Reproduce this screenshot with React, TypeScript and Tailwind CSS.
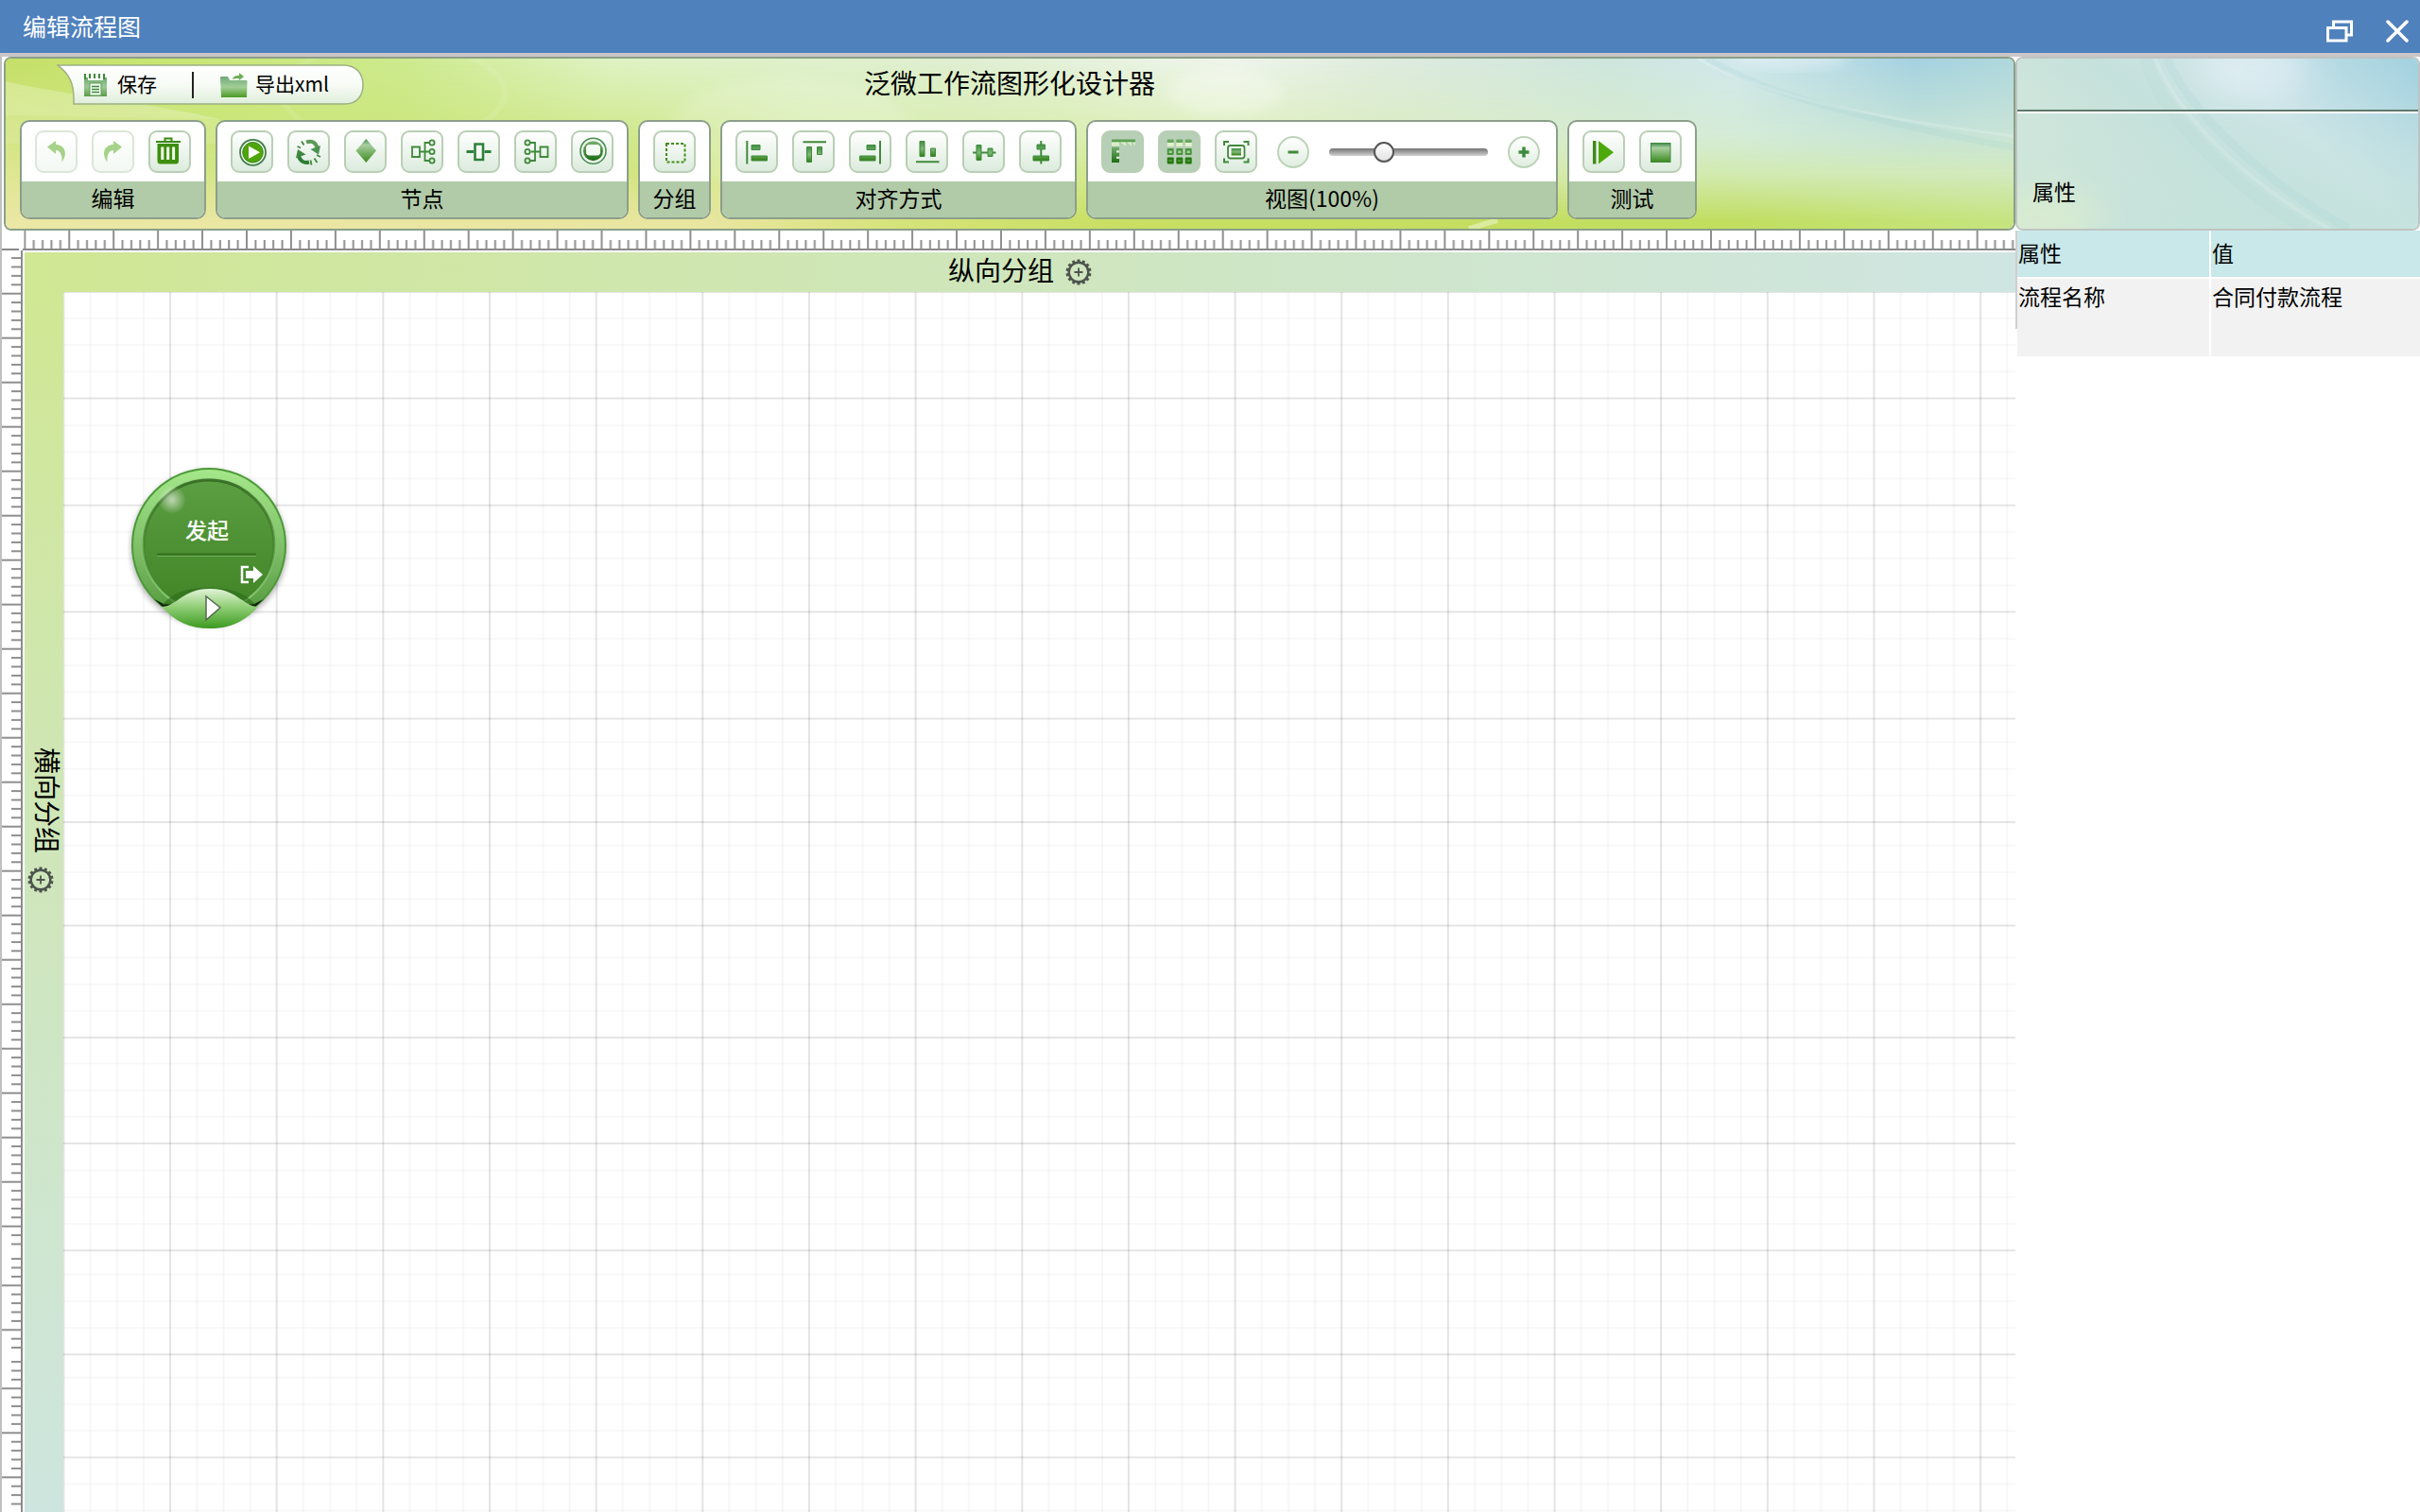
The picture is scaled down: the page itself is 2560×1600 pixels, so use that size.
import type { ReactNode } from 'react'

const GREEN = '#3f8a3a'

const Icon = ({ children }: { children: ReactNode }) => (
  <svg viewBox="2 2 41 41" className="size-[41px]" aria-hidden="true">
    {children}
  </svg>
)

const bars = (d: string, line: string) => (
  <Icon>
    <path d={line} stroke={GREEN} strokeWidth="2" />
    <path d={d} fill="url(#leaf)" stroke={GREEN} strokeWidth="1" />
  </Icon>
)

const icons = {
  undo: (
    <Icon>
      <path d="M13 17.500L22 11v4c9 0 13.500 9 6.500 18.500C29 26 27 21.500 22 21v4z" fill="#a5d288" />
    </Icon>
  ),
  redo: (
    <Icon>
      <path d="M32 17.500L23 11v4c-9 0-13.500 9-6.500 18.500C16 26 18 21.500 23 21v4z" fill="#a5d288" />
    </Icon>
  ),
  trash: (
    <Icon>
      <path d="M8 12h26" stroke="#3c8a10" strokeWidth="2" />
      <path d="M17.500 11.500V8.500h7v3" stroke="#3c8a10" strokeWidth="2" fill="none" />
      <path d="M9.500 14h22.500v18.500a3 3 0 0 1-3 3h-16.500a3 3 0 0 1-3-3z" fill="#3c8f0c" />
      <path d="M14.800 17.500v13.500M20.700 17.500v13.500M26.600 17.500v13.500" stroke="#f4faf0" strokeWidth="3" />
    </Icon>
  ),
  start: (
    <Icon>
      <circle cx="23.500" cy="23.300" r="13.500" fill="#f5faf3" stroke="#3d7f45" strokeWidth="1.800" />
      <circle cx="23.500" cy="23.300" r="10.800" fill="#4fa60a" stroke="#3a8420" strokeWidth="1" />
      <path d="M19 16.500L31 23.300L19 30z" fill="#fff" />
    </Icon>
  ),
  refresh: (
    <Icon>
      <path d="M20 12.500C25 10.500 29.500 12 31.500 18" stroke="#5c9a55" strokeWidth="4" fill="none" />
      <path d="M35 16L33 25.500L24.500 20z" fill="#4b9150" />
      <path d="M23 33.500C17.500 35 13.500 32.500 12 27" stroke="#2f7d33" strokeWidth="4" fill="none" />
      <path d="M9 29.500L11 20L19.500 25.500z" fill="#3f8a3f" />
      <path d="M10.500 17l3.500 1.500M15 11.500l2.500 4M24.500 31.500l1 5M28.500 29.500l3 4.500M31 26l4 2" stroke={GREEN} strokeWidth="1.800" />
    </Icon>
  ),
  diamond: (
    <Icon>
      <path d="M23.300 9L34 21.500L23.300 34L12.500 21.500z" fill="url(#gem)" />
    </Icon>
  ),
  fork: (
    <Icon>
      <g fill="none" stroke={GREEN} strokeWidth="1.800">
        <path d="M12 17.500h8v10.500h-8z M20 22.500h10 M30 13h-4.500v19h4.500" />
        <circle cx="33" cy="13" r="2.600" />
        <circle cx="33" cy="22.500" r="2.600" />
        <circle cx="33" cy="32" r="2.600" />
      </g>
    </Icon>
  ),
  merge: (
    <Icon>
      <path d="M9.500 22.500h7.500M28.500 22.500h7" stroke="#2f8038" strokeWidth="3" />
      <path d="M18.500 14.500h8.500v16.500h-8.500z" fill="#f5faf4" stroke="#2f8038" strokeWidth="2.600" />
    </Icon>
  ),
  join: (
    <Icon>
      <g fill="none" stroke={GREEN} strokeWidth="1.800">
        <path d="M27.500 17.500h8v10.500h-8z M27.500 22.500h-10 M17 13h5v19h-5" />
        <circle cx="14" cy="13" r="2.600" />
        <circle cx="14" cy="22.500" r="2.600" />
        <circle cx="14" cy="32" r="2.600" />
      </g>
    </Icon>
  ),
  end: (
    <Icon>
      <circle cx="23.500" cy="21.700" r="13.500" fill="#eef6ee" stroke="#4b8f50" strokeWidth="1.600" />
      <circle cx="23.500" cy="21.700" r="10.500" fill="url(#leafDark)" />
      <rect x="16" y="15" width="15" height="11.500" rx="3.500" fill="#f4faf4" />
    </Icon>
  ),
  group: (
    <Icon>
      <rect x="14" y="14" width="19.500" height="19.500" fill="none" stroke="#3f8f14" strokeWidth="2" strokeDasharray="3 2" />
    </Icon>
  ),
  left: bars('M17 15.500h9v5h-9z M17 27h16.500v5h-16.500z', 'M12.300 11v24.500'),
  top: bars('M15.500 17.500h5v16h-5z M26.500 17.500h5v8h-5z', 'M11.500 12.300h24.500'),
  right: bars('M19 15.500h9v5h-9z M11.500 27h16.500v5h-16.500z', 'M33 11v24.500'),
  bottom: bars('M15 11.500h5v16h-5z M26.500 19h5v8.500h-5z', 'M11 33.300h24.500'),
  middle: bars('M15 15.500h5v16h-5z M27 19h5v8.500h-5z', 'M11 23.500h24.500'),
  center: bars('M19 15h8.500v5h-8.500z M15 27h16.500v5h-16.500z', 'M23.300 11v24.500'),
  ruler: (
    <Icon>
      <path d="M11 9.500h25v3h-25z" fill="#5da052" />
      <path d="M11 12.500h8v4h-8z M20 12.500h6v4z M27 12.500h5v4z M33 12.500h3v4z" fill="#d9efc8" />
      <path d="M11 17.500h8v3.500h-3v2.500h3v4h-3v2.500h3v4h-8z" fill="url(#leafDark)" />
      <path d="M16 22.500h3M16 29h3" stroke="#e4f2dc" strokeWidth="1.500" />
    </Icon>
  ),
  grid: (
    <Icon>
      {[9.7, 19.3, 28.7].map((x) => (
        <g key={x}>
          <rect x={x} y="9.500" width="7" height="3.500" rx="1" fill="#6aa85f" />
          <rect x={x} y="13" width="7" height="4" fill="#e0f2cc" />
          <rect x={x} y="19" width="7" height="7" rx="1" fill="#4a9440" />
          <rect x={x + 2} y="21.500" width="3" height="2.500" fill="#a9d394" />
          <rect x={x} y="28.500" width="7" height="7" rx="1" fill="#24790f" />
          <rect x={x + 2} y="31" width="3" height="2" fill="#4f9a35" />
        </g>
      ))}
    </Icon>
  ),
  fit: (
    <Icon>
      <path d="M10 16v-4h5M30.500 12h5v4M35.500 29.500v4h-5M15 33.500h-5v-4" fill="none" stroke={GREEN} strokeWidth="2" />
      <rect x="14" y="16" width="17.500" height="13.500" rx="2.500" fill="#fff" stroke={GREEN} strokeWidth="1.800" />
      <rect x="17.500" y="19" width="10.500" height="7.500" fill="url(#leaf)" />
    </Icon>
  ),
  run: (
    <Icon>
      <path d="M12.700 11v24.500" stroke="#3f8a1c" strokeWidth="3.500" />
      <path d="M17 11L33 23.300L17 35.500z" fill="#4caa0c" />
    </Icon>
  ),
  stop: (
    <Icon>
      <rect x="12.500" y="13.500" width="20.500" height="20" fill="url(#gem)" stroke={GREEN} strokeWidth="1" />
    </Icon>
  ),
}

const groups: { label: string; tools: { name: keyof typeof icons; title: string; state?: 'off' | 'on' }[] }[] = [
  {
    label: '编辑',
    tools: [
      { name: 'undo', title: '撤销', state: 'off' },
      { name: 'redo', title: '重做', state: 'off' },
      { name: 'trash', title: '删除' },
    ],
  },
  {
    label: '节点',
    tools: [
      { name: 'start', title: '创建' },
      { name: 'refresh', title: '处理' },
      { name: 'diamond', title: '审批' },
      { name: 'fork', title: '分叉' },
      { name: 'merge', title: '中间点' },
      { name: 'join', title: '合并' },
      { name: 'end', title: '归档' },
    ],
  },
  { label: '分组', tools: [{ name: 'group', title: '分组' }] },
  {
    label: '对齐方式',
    tools: [
      { name: 'left', title: '左对齐' },
      { name: 'top', title: '上对齐' },
      { name: 'right', title: '右对齐' },
      { name: 'bottom', title: '下对齐' },
      { name: 'middle', title: '水平居中' },
      { name: 'center', title: '垂直居中' },
    ],
  },
  {
    label: '视图(100%)',
    tools: [
      { name: 'ruler', title: '标尺', state: 'on' },
      { name: 'grid', title: '网格', state: 'on' },
      { name: 'fit', title: '适应窗口' },
    ],
  },
  {
    label: '测试',
    tools: [
      { name: 'run', title: '运行' },
      { name: 'stop', title: '停止' },
    ],
  },
]

const toolState = {
  normal: 'border-[#b9cfb4] bg-linear-to-b from-white to-[#dcebdd]',
  off: 'border-[#dbe6d8] bg-linear-to-b from-white to-[#f3f8f3]',
  on: 'border-[#b9cfb4] bg-[#b7cfb6]',
}

const roundButton =
  'flex size-[34px] items-center justify-center rounded-full border-2 border-[#bdd4b8] bg-linear-to-b from-white to-[#e0eee0]'

// Shared gradients for every icon on the page
function Defs() {
  return (
    <svg className="absolute size-0" aria-hidden="true">
      <defs>
        <linearGradient id="leaf" x1="0" y1="0" x2="0" y2="1">
          <stop offset="0" stopColor="#3f8f42" />
          <stop offset="0.5" stopColor="#7fb877" />
          <stop offset="1" stopColor="#2f7f14" />
        </linearGradient>
        <linearGradient id="leafDark" x1="0" y1="0" x2="0" y2="1">
          <stop offset="0" stopColor="#77b070" />
          <stop offset="1" stopColor="#1d6b14" />
        </linearGradient>
        <linearGradient id="gem" x1="0" y1="0" x2="0" y2="1">
          <stop offset="0" stopColor="#3f8a4c" />
          <stop offset="0.25" stopColor="#a9cfa0" />
          <stop offset="1" stopColor="#3a8a1e" />
        </linearGradient>
      </defs>
    </svg>
  )
}

function GearIcon() {
  const teeth = Array.from({ length: 14 }, (_, i) => (i * 360) / 14)
  return (
    <svg viewBox="0 0 28 28" className="size-7" aria-hidden="true">
      {teeth.map((a) => (
        <rect key={a} x="12.500" y="0.500" width="3" height="4" fill="#4d534d" transform={`rotate(${a} 14 14)`} />
      ))}
      <circle cx="14" cy="14" r="10.300" fill="none" stroke="#4d534d" strokeWidth="2.400" />
      <path d="M14 9.500v9M9.500 14h9" stroke="#4d534d" strokeWidth="1.800" />
    </svg>
  )
}

// Green to blue sky artwork behind the toolbar
function ToolbarSky() {
  return (
    <svg viewBox="0 0 2124 180" preserveAspectRatio="none" className="absolute inset-0 size-full" aria-hidden="true">
      <defs>
        <linearGradient id="low">
          <stop offset="0" stopColor="#ebe7a5" />
          <stop offset="0.35" stopColor="#e9e6a0" />
          <stop offset="0.45" stopColor="#d5e378" />
          <stop offset="0.56" stopColor="#c8df62" />
          <stop offset="0.86" stopColor="#c1de5f" />
          <stop offset="1" stopColor="#c6e580" />
        </linearGradient>
        <linearGradient id="mid">
          <stop offset="0" stopColor="#d9e78c" />
          <stop offset="0.1" stopColor="#cde67c" />
          <stop offset="0.31" stopColor="#cbe474" />
          <stop offset="0.4" stopColor="#d8efa6" />
          <stop offset="0.53" stopColor="#d6ed9e" />
          <stop offset="0.75" stopColor="#dcefc2" />
          <stop offset="0.88" stopColor="#d7eed0" />
          <stop offset="1" stopColor="#d6ebd4" />
        </linearGradient>
        <linearGradient id="high">
          <stop offset="0" stopColor="#c4df68" />
          <stop offset="0.08" stopColor="#c8e673" />
          <stop offset="0.2" stopColor="#cdea8e" />
          <stop offset="0.3" stopColor="#def2c4" />
          <stop offset="0.48" stopColor="#dfeed2" />
          <stop offset="0.61" stopColor="#eef5ec" />
          <stop offset="0.68" stopColor="#dfebdf" />
          <stop offset="0.8" stopColor="#cde5dd" />
          <stop offset="0.86" stopColor="#d0e7ec" />
          <stop offset="0.95" stopColor="#a4d1e0" />
          <stop offset="1" stopColor="#aed7dd" />
        </linearGradient>
        <linearGradient id="fadeHigh" x1="0" y1="0" x2="0" y2="1">
          <stop offset="0" stopColor="#fff" />
          <stop offset="0.66" stopColor="#000" />
        </linearGradient>
        <linearGradient id="fadeMid" x1="0" y1="0" x2="0" y2="1">
          <stop offset="0.45" stopColor="#fff" />
          <stop offset="0.68" stopColor="#bbb" />
          <stop offset="0.96" stopColor="#000" />
        </linearGradient>
        <mask id="maskHigh">
          <rect width="2124" height="180" fill="url(#fadeHigh)" />
        </mask>
        <mask id="maskMid">
          <rect width="2124" height="180" fill="url(#fadeMid)" />
        </mask>
        <filter id="soft">
          <feGaussianBlur stdDeviation="6" />
        </filter>
      </defs>
      <rect width="2124" height="180" fill="url(#low)" />
      <rect width="2124" height="180" fill="url(#mid)" mask="url(#maskMid)" />
      <rect width="2124" height="180" fill="url(#high)" mask="url(#maskHigh)" />
      <path d="M0 24C80 42 150 46 226 64V90H0z" fill="#fff" opacity="0.14" />
      <path d="M0 24C80 42 150 46 226 64L0 60z" fill="#fff" opacity="0.12" />
      <ellipse cx="410" cy="36" rx="118" ry="52" fill="none" stroke="#fff" strokeWidth="6" opacity="0.09" />
      <ellipse cx="830" cy="80" rx="130" ry="60" fill="#fff" opacity="0.14" filter="url(#soft)" />
      <ellipse cx="1290" cy="36" rx="60" ry="24" fill="#fff" opacity="0.25" filter="url(#soft)" />
      <ellipse cx="1890" cy="0" rx="60" ry="12" fill="#fff" opacity="0.3" filter="url(#soft)" />
      <path d="M1790 0C1850 34 1940 58 2124 82" fill="none" stroke="#fff" strokeWidth="3" opacity="0.18" />
      <path d="M1800 0C1860 36 1950 62 2124 94" fill="none" stroke="#8fc7cc" strokeWidth="7" opacity="0.12" />
      <path d="M1548 180l30 -9" stroke="#fff" strokeWidth="6" opacity="0.4" />
    </svg>
  )
}

function PanelSky() {
  return (
    <svg viewBox="0 0 424 180" preserveAspectRatio="none" className="absolute inset-0 size-full" aria-hidden="true">
      <defs>
        <linearGradient id="panelBase" x1="0" y1="0.5" x2="1" y2="0">
          <stop offset="0" stopColor="#d3e7da" />
          <stop offset="0.35" stopColor="#c5e1dc" />
          <stop offset="0.6" stopColor="#cee5e8" />
          <stop offset="1" stopColor="#a2d1df" />
        </linearGradient>
        <linearGradient id="panelFade" x1="0" y1="0" x2="0" y2="1">
          <stop offset="0.2" stopColor="#c4e2dc" stopOpacity="0" />
          <stop offset="1" stopColor="#c4e2dc" />
        </linearGradient>
        <filter id="panelSoft" x="-100%" y="-200%" width="300%" height="500%">
          <feGaussianBlur stdDeviation="18" />
        </filter>
      </defs>
      <rect width="424" height="180" fill="url(#panelBase)" />
      <rect width="424" height="180" fill="url(#panelFade)" opacity="0.8" />
      <ellipse cx="250" cy="10" rx="60" ry="28" fill="#e6f1f7" opacity="0.7" filter="url(#panelSoft)" />
      <ellipse cx="20" cy="170" rx="70" ry="36" fill="#dcedcf" opacity="0.8" filter="url(#panelSoft)" />
      <path d="M146 0C170 60 240 130 330 180" fill="none" stroke="#fff" strokeWidth="4" opacity="0.14" />
      <path d="M158 0C184 56 254 126 350 180" fill="none" stroke="#8cc6cb" strokeWidth="9" opacity="0.1" />
      <path d="M135 0C156 64 226 134 306 180" fill="none" stroke="#8cc6bd" strokeWidth="14" opacity="0.06" />
    </svg>
  )
}

function FileTab() {
  return (
    <div className="relative ml-[54px] flex h-[43px] w-[325px] items-center pl-7">
      <svg viewBox="0 0 326 43" className="absolute inset-0 size-full" aria-hidden="true">
        <defs>
          <linearGradient id="tab" x1="0" y1="0" x2="0" y2="1">
            <stop offset="0" stopColor="#fff" />
            <stop offset="0.5" stopColor="#f7fbf5" />
            <stop offset="1" stopColor="#e0eedb" />
          </linearGradient>
        </defs>
        <path
          d="M1 1H304C318 1 325 10 325 22C325 34 318 42 306 42H18C19 22 14 10 1 1z"
          fill="url(#tab)"
          stroke="#9cb183"
          strokeWidth="1.500"
        />
      </svg>
      <button className="relative flex items-center gap-2.5 text-[21px] leading-8">
        <svg viewBox="0 0 26 26" className="size-[26px]" aria-hidden="true">
          <path d="M1 5v20h24V5h-4v3H5V5z" fill="url(#leaf)" opacity="0.75" />
          <path d="M2 1v6M7 1v5M12 1v5M17 1v5M22 1v6" stroke={GREEN} strokeWidth="2" />
          <path d="M7 11h12v13H7z" fill="#f4faf2" stroke="#5d9e55" strokeWidth="1" />
          <path d="M9 14.500h8M9 17.500h8M9 20.500h8" stroke={GREEN} strokeWidth="1.500" />
        </svg>
        <span className="pb-[3px]">保存</span>
      </button>
      <span className="relative ml-[37px] h-7 w-[2px] bg-[#222]" />
      <button className="relative ml-7 flex items-center gap-2 text-[21px] leading-8">
        <svg viewBox="0 0 29 26" className="h-[26px] w-[29px]" aria-hidden="true">
          <path d="M0 5q0 -1 1 -1h7l2 4h17q2 0 1.500 2L28 26H1z" fill="url(#folder)" />
          <path d="M13 7c1-4 4-4 7-4V0l5 4l-5 4V6c-3 0-5 0-7 1z" fill="#6dae58" />
          <defs>
            <linearGradient id="folder" x1="0" y1="0" x2="0" y2="1">
              <stop offset="0" stopColor="#6fa877" />
              <stop offset="0.5" stopColor="#a2cf98" />
              <stop offset="1" stopColor="#4a9a24" />
            </linearGradient>
          </defs>
        </svg>
        <span className="pb-[3px]">导出xml</span>
      </button>
    </div>
  )
}

function ZoomControl() {
  return (
    <div className="mr-[3px] ml-1.5 flex items-center gap-[21px]">
      <button className={roundButton} aria-label="缩小">
        <svg viewBox="0 0 12 12" className="size-3" aria-hidden="true">
          <path d="M0.500 6h11" stroke={GREEN} strokeWidth="3" />
        </svg>
      </button>
      <input
        type="range"
        aria-label="缩放比例"
        min={10}
        max={290}
        defaultValue={100}
        className="h-2 w-[168px] appearance-none rounded-full bg-linear-to-b from-[#757575] to-[#d2d2d2] [&::-webkit-slider-thumb]:size-[22px] [&::-webkit-slider-thumb]:appearance-none [&::-webkit-slider-thumb]:rounded-full [&::-webkit-slider-thumb]:border-2 [&::-webkit-slider-thumb]:border-[#555] [&::-webkit-slider-thumb]:bg-linear-to-b [&::-webkit-slider-thumb]:from-white [&::-webkit-slider-thumb]:to-[#e2e2e2]"
      />
      <button className={roundButton} aria-label="放大">
        <svg viewBox="0 0 12 12" className="size-3" aria-hidden="true">
          <path d="M0.500 6h11M6 0.500v11" stroke={GREEN} strokeWidth="3.500" />
        </svg>
      </button>
    </div>
  )
}

function Toolbar() {
  return (
    <div className="relative ml-[2px] overflow-hidden rounded-lg border-2 border-[#8b9f88] pt-1.5 pb-2.5">
      <ToolbarSky />
      <div className="relative grid grid-cols-[1fr_auto_1fr] items-center">
        <FileTab />
        <h2 className="pb-1.5 text-[28px] leading-9">泛微工作流图形化设计器</h2>
      </div>
      <div className="relative mt-4 flex gap-2.5 pl-[15px]">
        {groups.map((group) => (
          <section key={group.label} className="overflow-hidden rounded-[10px] border-2 border-[#8b9f8b] bg-white">
            <div className="flex h-[63px] items-center gap-[15px] px-3.5">
              {group.tools.map((tool) => (
                <button
                  key={tool.name}
                  title={tool.title}
                  disabled={tool.state === 'off'}
                  className={`size-[45px] shrink-0 rounded-[9px] border-2 ${toolState[tool.state ?? 'normal']}`}
                >
                  {icons[tool.name]}
                </button>
              ))}
              {group.label.startsWith('视图') && <ZoomControl />}
            </div>
            <h3 className="h-[38px] bg-[#b1caa8] text-center text-[23px] leading-[34px]">{group.label}</h3>
          </section>
        ))}
      </div>
    </div>
  )
}

function HorizontalRuler() {
  return (
    <svg className="h-[21px] w-full" aria-hidden="true">
      <defs>
        <pattern id="hticks" x="1.300" width="46.940" height="21" patternUnits="userSpaceOnUse">
          <rect width="2" height="21" fill="#8f8f8f" />
          {[1, 2, 3, 4].map((i) => (
            <rect key={i} x={i * 9.388} y="10" width="2" height="11" fill="#8f8f8f" />
          ))}
        </pattern>
      </defs>
      <rect x="1.300" width="100%" height="21" fill="url(#hticks)" />
      <rect y="19" width="100%" height="2" fill="#8a8a8a" />
    </svg>
  )
}

// Every stretch of the vertical ruler restarts from its own first tick
const rulerParts = [
  { from: 0, to: 1060, base: 45.7 },
  { from: 1066, to: 1168, base: 1095.3 },
  { from: 1174, to: 1335, base: 1204.3 },
]

function VerticalRuler() {
  const ticks = rulerParts.flatMap(({ from, to, base }) => {
    const list: { y: number; major: boolean }[] = []
    for (let i = -5; base + i * 9.4 <= to; i++) {
      const y = base + i * 9.4
      if (y >= from) list.push({ y, major: i % 5 === 0 })
    }
    return list
  })
  return (
    <div className="relative w-[22px] shrink-0 border-r-2 border-[#8a8a8a]">
      <svg className="absolute inset-0 size-full" aria-hidden="true">
        {ticks.map((tick) => (
          <rect key={tick.y} x={tick.major ? 0 : 10} y={tick.y - 1} width="20" height="2" fill="#8f8f8f" />
        ))}
      </svg>
    </div>
  )
}

const rows = [0, 112.5, 225.7, 338.5, 451.5, 561, 670.5, 789, 901, 1014.3, 1124.3, 1233.3, 1346]

function Grid() {
  return (
    <svg className="absolute inset-0 size-full" aria-hidden="true">
      <defs>
        <pattern id="columns" x="0.400" width="112.650" height="100" patternUnits="userSpaceOnUse">
          {[1, 2, 3].map((i) => (
            <rect key={i} x={i * 28.2 - 1} width="2" height="100" fill="#f7f7f7" />
          ))}
          <rect x="0" width="1" height="100" fill="#e4e4e4" />
          <rect x="111.650" width="1" height="100" fill="#e4e4e4" />
        </pattern>
      </defs>
      <rect width="100%" height="100%" fill="url(#columns)" />
      {rows.slice(1).flatMap((y) =>
        [28.2, 56.4, 84.6].map((d) => <rect key={y - d} y={y - d - 1} width="100%" height="2" fill="#000" opacity="0.028" />),
      )}
      {rows.map((y) => (
        <rect key={y} y={y - 1} width="100%" height="2" fill="#000" opacity="0.1" />
      ))}
    </svg>
  )
}

function StartNode() {
  return (
    <button className="absolute top-[181px] left-[68px] h-[182px] w-[172px]">
      <svg viewBox="0 0 172 182" className="absolute inset-0 size-full" aria-hidden="true">
        <defs>
          <linearGradient id="rim" x1="0" y1="0" x2="0" y2="1">
            <stop offset="0" stopColor="#a5e88a" />
            <stop offset="0.55" stopColor="#7cbd66" />
            <stop offset="1" stopColor="#4f9438" />
          </linearGradient>
          <linearGradient id="face" x1="0" y1="0" x2="0" y2="1">
            <stop offset="0" stopColor="#5c9e42" />
            <stop offset="1" stopColor="#408426" />
          </linearGradient>
          <linearGradient id="lip" x1="0" y1="0" x2="0" y2="1">
            <stop offset="0" stopColor="#2c5f1c" />
            <stop offset="0.5" stopColor="#3f7a2a" stopOpacity="0.7" />
            <stop offset="1" stopColor="#3f7a2a" stopOpacity="0" />
          </linearGradient>
          <linearGradient id="lens" x1="0" y1="0" x2="0" y2="1">
            <stop offset="0" stopColor="#e2f4d8" />
            <stop offset="0.45" stopColor="#92cf78" />
            <stop offset="1" stopColor="#3c9a20" />
          </linearGradient>
          <radialGradient id="shine">
            <stop offset="0" stopColor="#fff" stopOpacity="0.6" />
            <stop offset="1" stopColor="#fff" stopOpacity="0" />
          </radialGradient>
          <filter id="shadow" x="-20%" y="-20%" width="140%" height="140%">
            <feGaussianBlur stdDeviation="3" />
          </filter>
        </defs>
        <circle cx="86" cy="90" r="82" fill="#000" opacity="0.35" filter="url(#shadow)" />
        <circle cx="86" cy="87" r="81" fill="url(#rim)" stroke="#4c9a38" strokeWidth="2" />
        <path d="M28 144L38 153H134L144 144L134 149H38z" fill="#10200a" />
        <circle cx="86" cy="87" r="70" fill="url(#face)" stroke="#8bcc74" strokeWidth="2" />
        <circle cx="86" cy="87" r="69" fill="none" stroke="url(#lip)" strokeWidth="3" opacity="0.8" />
        <circle cx="47" cy="39" r="15" fill="url(#shine)" />
        <path d="M31 96.500h105" stroke="#34701f" strokeWidth="2" />
        <path d="M31 98.500h105" stroke="#6fae55" strokeWidth="1" />
        <path d="M44 143C62 128 110 128 128 143L136 150H36z" fill="#2c6a18" opacity="0.6" />
        <path d="M36 152C52 152 58 133 87 133C116 133 122 152 138 152C124 168 108 175 87 175C66 175 50 168 36 152z" fill="url(#lens)" />
        <path d="M83 141L98 153L83 166z" fill="#fff" stroke="#55694e" strokeWidth="1.500" />
        <path d="M128 110h-7v16h7" fill="none" stroke="#fff" strokeWidth="2.500" />
        <path d="M125 114h8v-5l10 9l-10 9v-5h-8z" fill="#fff" />
      </svg>
      <span className="absolute inset-x-0 top-[54px] pr-1 text-center text-[23px] leading-8 font-medium text-white">发起</span>
    </button>
  )
}

export default function App() {
  return (
    <div className="flex min-h-screen flex-col bg-white font-['Noto_Sans_CJK_SC','Noto_Sans',sans-serif] text-black">
      <Defs />
      <header className="flex h-[60px] items-center justify-between border-b-4 border-[#c9c6c7] bg-[#4f81bd] pr-3 pl-6 text-white">
        <h1 className="pb-[3px] text-[25px] leading-8">编辑流程图</h1>
        <div className="flex gap-[35px] pt-2.5">
          <button aria-label="还原">
            <svg viewBox="0 0 28 24" className="h-6 w-7" aria-hidden="true">
              <path d="M7.500 8V2H26.500V16H21" fill="none" stroke="#fff" strokeWidth="3" />
              <path d="M1.500 8.500H21V22H1.500z" fill="none" stroke="#fff" strokeWidth="3" />
            </svg>
          </button>
          <button aria-label="关闭">
            <svg viewBox="0 0 24 24" className="size-6" aria-hidden="true">
              <path d="M2 2L22 22M22 2L2 22" stroke="#fff" strokeWidth="3.500" strokeLinecap="round" />
            </svg>
          </button>
        </div>
      </header>

      <div className="flex flex-1">
        <main className="flex min-w-0 flex-1 flex-col border-l-2 border-[#c0c0c0]">
          <Toolbar />
          <div className="flex">
            <div className="mr-1 h-[21px] w-[18px] shrink-0 border-b-2 border-[#8a8a8a]" />
            <HorizontalRuler />
          </div>
          <div className="flex flex-1">
            <VerticalRuler />
            <div className="mt-[2px] ml-[2px] flex min-w-0 flex-1 flex-col">
              <div className="flex h-[42px] items-center justify-center gap-3 bg-linear-to-r from-[#d0e793] via-[#cfe6bd] to-[#cfe5e2]">
                <span className="pb-1.5 text-[28px] leading-9">纵向分组</span>
                <button aria-label="纵向分组设置">
                  <GearIcon />
                </button>
              </div>
              <div className="flex flex-1">
                <div className="flex w-[41px] shrink-0 flex-col items-center bg-linear-to-b from-[#d0e793] via-[#cfe6bd] to-[#cee5df] pt-[482px]">
                  <span className="pl-2 text-[28px] leading-8 [text-orientation:sideways] [writing-mode:vertical-rl]">横向分组</span>
                  <button className="mt-3.5 mr-2" aria-label="横向分组设置">
                    <GearIcon />
                  </button>
                </div>
                <div className="relative flex-1 overflow-hidden">
                  <Grid />
                  <StartNode />
                </div>
              </div>
            </div>
          </div>
        </main>

        <aside className="w-[428px] shrink-0">
          <div className="relative flex h-[184px] flex-col overflow-hidden rounded-lg border-2 border-[#bfc4c2]">
            <PanelSky />
            <div className="relative h-[58px] border-b-2 border-white">
              <div className="h-full border-b-2 border-[#5f7a6c]" />
            </div>
            <h2 className="relative mt-auto mb-[22px] ml-4 text-[23px] leading-9">属性</h2>
          </div>
          <div className="h-[104px] border-l-2 border-[#cfcfcf]">
            <table className="w-full table-fixed text-left text-[23px] leading-8">
              <thead>
                <tr className="h-[50px] border-b-2 border-white bg-[#c9e8e9]">
                  <th className="w-[204px] border-r-2 border-white pb-1 pl-[1px] font-normal">属性</th>
                  <th className="pb-1 pl-[1px] font-normal">值</th>
                </tr>
              </thead>
              <tbody>
                <tr className="h-[83px] bg-[#f2f2f2] align-top">
                  <td className="border-r-2 border-white pt-[2px] pl-[1px]">流程名称</td>
                  <td className="pt-[2px] pl-[1px]">合同付款流程</td>
                </tr>
              </tbody>
            </table>
          </div>
        </aside>
      </div>
    </div>
  )
}
